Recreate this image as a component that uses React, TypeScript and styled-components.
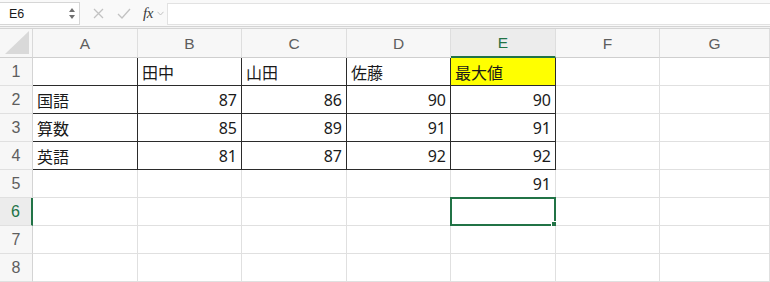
import * as React from "react";
import styled, { createGlobalStyle, css } from "styled-components";

const GlobalStyle = createGlobalStyle`
  html, body {
    margin: 0;
    padding: 0;
    background: #ffffff;
  }
  body {
    font-family: "Noto Sans CJK JP", "Noto Sans", sans-serif;
    overflow: hidden;
  }
`;

const COLS = ["A", "B", "C", "D", "E", "F", "G"];
const WIDTHS = [33, 105, 104, 105, 104, 105, 104, 110];
const ROW_COUNT = 8;

type CellValue = { text: string; num?: boolean };

const DATA: Record<number, (CellValue | null)[]> = {
  1: [null, { text: "田中" }, { text: "山田" }, { text: "佐藤" }, { text: "最大値" }],
  2: [{ text: "国語" }, { text: "87", num: true }, { text: "86", num: true }, { text: "90", num: true }, { text: "90", num: true }],
  3: [{ text: "算数" }, { text: "85", num: true }, { text: "89", num: true }, { text: "91", num: true }, { text: "91", num: true }],
  4: [{ text: "英語" }, { text: "81", num: true }, { text: "87", num: true }, { text: "92", num: true }, { text: "92", num: true }],
  5: [null, null, null, null, { text: "91", num: true }],
};

const Page = styled.div`
  width: 770px;
  height: 282px;
  overflow: hidden;
  background: #fff;
`;

const Toolbar = styled.div`
  display: flex;
  align-items: center;
  height: 26px;
  background: #f9f9f9;
  border-bottom: 1px solid #d4d4d4;
`;

const NameBox = styled.div`
  display: flex;
  align-items: center;
  justify-content: space-between;
  box-sizing: border-box;
  width: 80px;
  height: 23px;
  margin-top: 1px;
  padding: 0 4px 0 9px;
  background: #fff;
  border: 1px solid #d6d6d6;
  border-left: none;
  font-family: "Liberation Sans", Arial, sans-serif;
  font-size: 12.5px;
  color: #1a1a1a;
`;

const Spinner = styled.div`
  display: flex;
  flex-direction: column;
  gap: 3px;
`;

const Tri = styled.span<{ down?: boolean }>`
  width: 0;
  height: 0;
  border-left: 3.5px solid transparent;
  border-right: 3.5px solid transparent;
  ${({ down }) =>
    down
      ? css`border-top: 4.5px solid #707070;`
      : css`border-bottom: 4.5px solid #707070;`}
`;

const Tools = styled.div`
  display: flex;
  align-items: center;
  width: 87px;
  height: 100%;
  padding-left: 9px;
  box-sizing: border-box;
`;

const ToolIcon = styled.span<{ w: number }>`
  display: flex;
  align-items: center;
  justify-content: center;
  width: ${({ w }) => w}px;
`;

const Fx = styled.span`
  font-family: "Liberation Serif", "Times New Roman", serif;
  font-style: italic;
  font-size: 15px;
  color: #3a3a3a;
  letter-spacing: -0.5px;
`;

const FormulaInput = styled.div`
  flex: 1;
  height: 20px;
  margin-top: 2px;
  background: #fff;
  border: 1px solid #e2e2e2;
  border-right: none;
`;

const Gap = styled.div`
  height: 1px;
  background: #f3f3f3;
  border-bottom: 1px solid #d4d4d4;
`;

const Grid = styled.div`
  display: grid;
  grid-template-columns: ${WIDTHS.map((w) => `${w}px`).join(" ")};
  grid-template-rows: 29px repeat(${ROW_COUNT}, 28px);
`;

const Corner = styled.div`
  position: relative;
  box-sizing: border-box;
  background: #f7f7f7;
  border-right: 1px solid #d9d9d9;
  border-bottom: 1px solid #cfcfcf;
`;

const ColHeader = styled.div<{ selected?: boolean }>`
  display: flex;
  align-items: center;
  justify-content: center;
  box-sizing: border-box;
  padding-top: 1px;
  font-family: "Liberation Sans", Arial, sans-serif;
  font-size: 15.5px;
  color: ${({ selected }) => (selected ? "#217346" : "#5e5e5e")};
  background: ${({ selected }) => (selected ? "#ececec" : "#f7f7f7")};
  border-right: 1px solid #dedede;
  border-bottom: ${({ selected }) => (selected ? "2px solid #217346" : "1px solid #cfcfcf")};
`;

const RowHeader = styled.div<{ selected?: boolean }>`
  display: flex;
  align-items: center;
  justify-content: center;
  box-sizing: border-box;
  font-family: "Liberation Sans", Arial, sans-serif;
  font-size: 16px;
  color: ${({ selected }) => (selected ? "#217346" : "#5e5e5e")};
  background: ${({ selected }) => (selected ? "#ececec" : "#f7f7f7")};
  border-right: ${({ selected }) => (selected ? "2px solid #217346" : "1px solid #d4d4d4")};
  border-bottom: 1px solid #e0e0e0;
`;

const Cell = styled.div<{
  num?: boolean;
  fill?: string;
  darkRight?: boolean;
  darkBottom?: boolean;
}>`
  position: relative;
  display: flex;
  align-items: center;
  justify-content: ${({ num }) => (num ? "flex-end" : "flex-start")};
  box-sizing: border-box;
  padding: 1px 4px 0 4px;
  font-family: ${({ num }) =>
    num
      ? `"Noto Sans", "Noto Sans CJK JP", sans-serif`
      : `"Noto Sans CJK JP", sans-serif`};
  font-size: 16px;
  color: #1a1a1a;
  background: ${({ fill }) => fill || "#fff"};
  border-right: 1px solid ${({ darkRight }) => (darkRight ? "#2b2b2b" : "#e0e0e0")};
  border-bottom: 1px solid ${({ darkBottom }) => (darkBottom ? "#2b2b2b" : "#e0e0e0")};
  white-space: nowrap;
`;

const Selection = styled.div`
  position: absolute;
  left: -1px;
  top: -1px;
  right: -1px;
  bottom: -1px;
  border: 2px solid #217346;
  pointer-events: none;
`;

const Handle = styled.span`
  position: absolute;
  right: -4px;
  bottom: -4px;
  width: 5px;
  height: 5px;
  background: #217346;
  border: 1px solid #fff;
`;

export default function App() {
  const rows = Array.from({ length: ROW_COUNT }, (_, i) => i + 1);
  return (
    <Page>
      <GlobalStyle />
      <Toolbar>
        <NameBox>
          <span>E6</span>
          <Spinner>
            <Tri />
            <Tri down />
          </Spinner>
        </NameBox>
        <Tools>
          <ToolIcon w={18}>
            <svg width="11" height="11" viewBox="0 0 11 11">
              <path d="M1 1 L10 10 M10 1 L1 10" stroke="#c2c2c2" strokeWidth="1.3" fill="none" />
            </svg>
          </ToolIcon>
          <ToolIcon w={34}>
            <svg width="14" height="11" viewBox="0 0 14 11">
              <path d="M1 6 L5 10 L13 1" stroke="#c2c2c2" strokeWidth="1.3" fill="none" />
            </svg>
          </ToolIcon>
          <ToolIcon w={14}>
            <Fx>fx</Fx>
          </ToolIcon>
          <ToolIcon w={10}>
            <svg width="7" height="5" viewBox="0 0 7 5">
              <path d="M0.5 0.8 L3.5 4 L6.5 0.8" stroke="#c2c2c2" strokeWidth="1" fill="none" />
            </svg>
          </ToolIcon>
        </Tools>
        <FormulaInput />
      </Toolbar>
      <Gap />
      <Grid>
        <Corner>
          <svg
            width="24"
            height="23"
            viewBox="0 0 24 23"
            style={{ position: "absolute", right: 3, bottom: 3 }}
          >
            <polygon points="24,0 24,23 0,23" fill="#d9d9d9" />
          </svg>
        </Corner>
        {COLS.map((c) => (
          <ColHeader key={c} selected={c === "E"}>
            {c}
          </ColHeader>
        ))}
        {rows.map((r) => (
          <React.Fragment key={r}>
            <RowHeader selected={r === 6}>{r}</RowHeader>
            {COLS.map((c, ci) => {
              const v = DATA[r]?.[ci] ?? null;
              const inTable = r <= 4 && ci <= 4;
              return (
                <Cell
                  key={c}
                  num={v?.num}
                  fill={r === 1 && c === "E" ? "#ffff00" : undefined}
                  darkRight={inTable}
                  darkBottom={inTable}
                >
                  {v?.text}
                  {r === 6 && c === "E" && (
                    <Selection>
                      <Handle />
                    </Selection>
                  )}
                </Cell>
              );
            })}
          </React.Fragment>
        ))}
      </Grid>
    </Page>
  );
}
